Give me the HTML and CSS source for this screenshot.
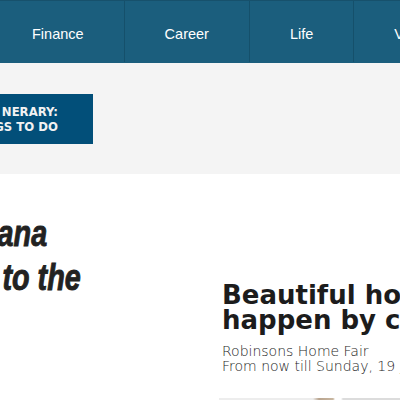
FILE: index.html
```html
<!DOCTYPE html>
<html>
<head>
<meta charset="utf-8">
<link rel="stylesheet" href="styles.css">
</head>
<body>
<nav class="nav">
  <a class="nav-item">Finance</a>
  <a class="nav-item">Career</a>
  <a class="nav-item">Life</a>
  <a class="nav-item">Videos</a>
</nav>
<section class="band">
  <div class="banner">
    <span class="banner-line">NERARY:</span>
    <span class="banner-line">GS TO DO</span>
  </div>
</section>
<main class="main">
  <div class="left">
    <h2 class="story-title"><span class="l1">ana</span><span class="l2">to the</span></h2>
  </div>
  <div class="right">
    <h1 class="ad-title">Beautiful homes<br>happen by chance</h1>
    <p class="ad-sub">Robinsons Home Fair<br>From now till Sunday, 19 July</p>
    <div class="ad-image"></div>
  </div>
</main>
</body>
</html>
```
FILE: styles.css
```css
html, body {
  margin: 0;
  padding: 0;
  overflow: hidden;
  background: #ffffff;
}
body {
  width: 400px;
  height: 400px;
  font-family: "Liberation Sans", Arial, sans-serif;
}
.nav {
  display: flex;
  height: 61px;
  background: #1b5e7d;
  border-top: 1px solid #17516c;
  padding-bottom: 1px;
  margin-left: -8px;
  white-space: nowrap;
}
.nav-item {
  display: flex;
  align-items: center;
  padding: 5px 40px 0;
  height: 61px;
  border-right: 1px solid #15506b;
  color: #ffffff;
  font-size: 14.5px;
  line-height: 1;
  box-sizing: border-box;
}
.band {
  height: 111px;
  background: #f4f4f4;
  padding-top: 31px;
  box-sizing: border-box;
}
.banner {
  width: 93px;
  height: 50px;
  background: #024f79;
  display: flex;
  flex-direction: column;
  align-items: flex-end;
  padding: 10px 35px 0 0;
  box-sizing: border-box;
  overflow: hidden;
}
.banner-line {
  color: #f2f2f2;
  font-family: "DejaVu Sans", sans-serif;
  font-stretch: condensed;
  font-weight: bold;
  font-size: 13px;
  line-height: 15px;
  letter-spacing: 0;
  white-space: nowrap;
}
.main {
  display: flex;
}
.left {
  width: 222px;
  flex: none;
  padding-top: 38px;
}
.story-title {
  margin: 0;
  font-family: "Liberation Sans", Arial, sans-serif;
  font-weight: bold;
  font-style: italic;
  font-size: 36px;
  line-height: 44px;
  color: #222222;
  -webkit-text-stroke: 0.9px #222222;
  transform: scaleX(0.8);
  transform-origin: left top;
}
.story-title span {
  display: block;
  white-space: nowrap;
}
.l1 { margin-left: -3px; }
.l2 { margin-left: 3px; }
.right {
  flex: none;
  padding-top: 109px;
  white-space: nowrap;
}
.ad-title {
  margin: 0;
  font-family: "DejaVu Sans", sans-serif;
  font-weight: bold;
  font-size: 26px;
  line-height: 25px;
  color: #1c1c1c;
}
.ad-sub {
  margin: 11px 0 0;
  font-family: "DejaVu Sans", sans-serif;
  font-weight: 200;
  font-size: 14px;
  line-height: 15px;
  color: #1e1e1e;
}
.ad-image {
  margin-top: 24px;
  margin-left: -3px;
  width: 200px;
  height: 20px;
  background: linear-gradient(90deg, #ededed 0, #ededed 47%, #b9a48e 50%, #c8b6a0 57%, #ffffff 58%, #ffffff 61%, #dcdcdc 62%, #dcdcdc 100%);
}
```
